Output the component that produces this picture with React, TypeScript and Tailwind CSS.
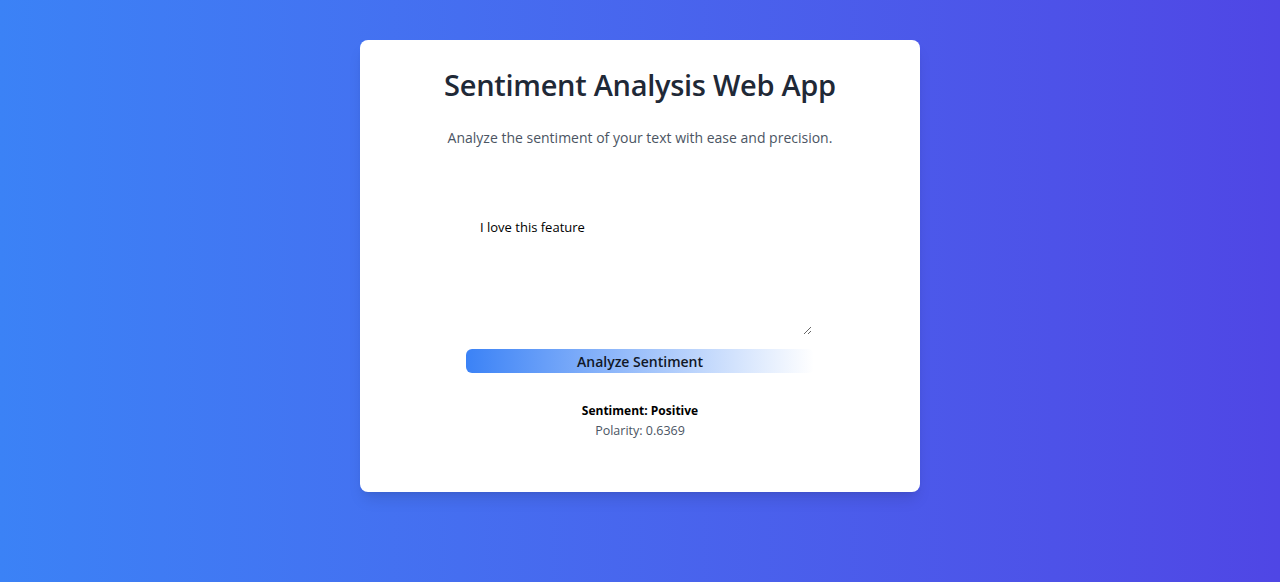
export default function App() {
  return (
    <div
      className="min-h-[582px] w-full bg-gradient-to-r from-[#3b82f6] to-[#4f46e5] flex justify-center pt-10"
      style={{ fontFamily: '"Open Sans", "Noto Sans", sans-serif' }}
    >
      <div className="w-[560px] h-[452px] bg-white rounded-lg shadow-lg px-8 pt-[27px] flex flex-col items-center">
        <h1 className="text-[29px] leading-9 font-semibold text-[#1f2937] tracking-[-0.01em]">Sentiment Analysis Web App</h1>
        <p className="mt-[23px] text-[14px] leading-6 text-[#4b5563]">
          Analyze the sentiment of your text with ease and precision.
        </p>
        <textarea
          className="mt-[53px] w-[348px] h-[134px] p-3 text-[13px] leading-5 text-black outline-none border-2 border-white"
          defaultValue="I love this feature"
        />
        <button className="mt-[12px] w-[348px] h-6 rounded-md bg-gradient-to-r from-[#3b82f6] to-transparent text-[14px] font-semibold text-[#111827]">
          Analyze Sentiment
        </button>
        <div className="mt-[28px] flex flex-col items-center">
          <p className="text-[12px] leading-5 font-bold text-black">Sentiment: Positive</p>
          <p className="text-[12.5px] leading-5 text-[#4b5563]">Polarity: 0.6369</p>
        </div>
      </div>
    </div>
  )
}
